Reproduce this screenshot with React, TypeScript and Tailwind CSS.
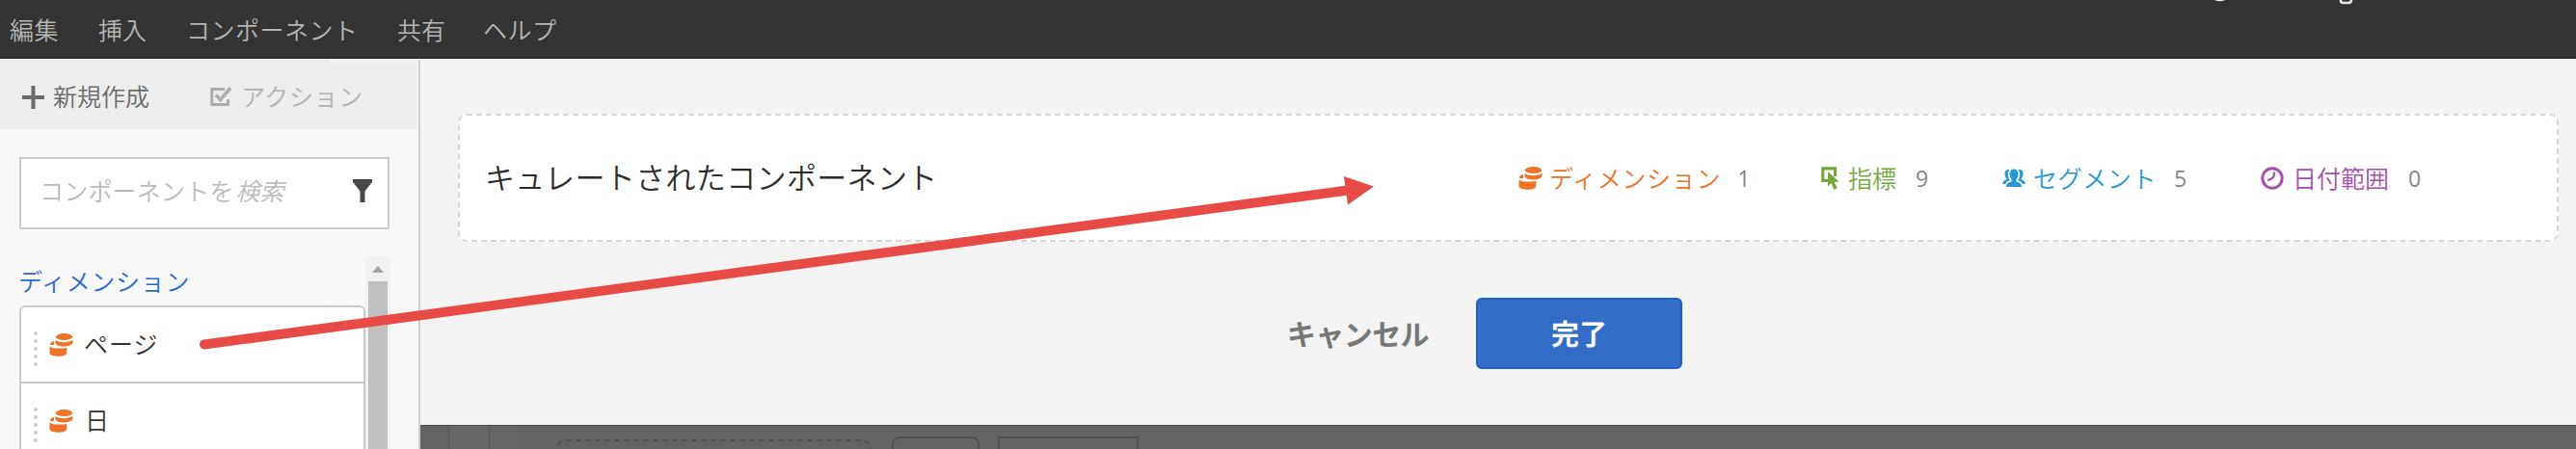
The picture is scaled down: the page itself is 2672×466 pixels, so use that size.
import React from "react";

const Coins = ({ className = "" }: { className?: string }) => (
  <svg className={`shrink-0 ${className}`} width="25" height="24" viewBox="0 0 25 24" fill="#ee7328">
    <ellipse cx="15.5" cy="3.600" rx="8.800" ry="3.500" />
    <path d="M6.500 6.800C8.500 8.600 12 9.200 15.500 9.200S22.600 8.400 24.500 6.800V9.500C23.500 12.300 20 13.600 15.500 13.600C10.500 13.600 6.500 12.200 6.500 9.500Z" />
    <path d="M5 8V12C4 12.200 2 12.200.6 11.600C.8 10 2.500 8.600 5 8Z" />
    <path d="M.5 13.400C2.500 15 6 15.600 9.500 15.600C13 15.600 16 15.400 18.300 15V20.400C17.500 22.800 13.900 23.700 9.400 23.700S1.100 22.800.5 20.400Z" />
  </svg>
);
const Metric = () => (
  <svg className="shrink-0" width="20" height="24" viewBox="0 0 20 24">
    <path d="M7 14.500H1.800V1.800H14.500V10" fill="none" stroke="#75a83b" strokeWidth="3.200" />
    <path d="M7 5V20.500l3.500-3.500 2.800 6.800 3.300-1.500-2.800-6.300 4.700-.5z" fill="#75a83b" />
  </svg>
);
const Segment = () => (
  <svg className="shrink-0" width="24" height="20" viewBox="0 0 24 20" fill="#2a98d2">
    <path d="M12 .5c3 0 4.500 2 4.500 5 0 2.500-1 4.500-2 5.500v2.500c3 1 5.500 2 5.500 5.500H4c0-3.500 2.500-4.500 5.500-5.500V11c-1-1-2-3-2-5.500 0-3 1.500-5 4.500-5z" />
    <path d="M7.500 1.200C4 .5 2.200 2.500 2.500 6c.1 2 .8 3 1.700 4v1.500C2 12.300.300 13 .2 16h3c.8-2 2.300-3 4.300-3.500v-1C5.500 8.500 5.300 4 7.500 1.200zM16.500 1.200c3.500-.7 5.300 1.300 5 4.800-.1 2-.8 3-1.700 4v1.500c2.200.8 3.900 1.500 4 4.500h-3c-.8-2-2.300-3-4.300-3.500v-1c2-3 2.200-7.500 0-10.300z" />
  </svg>
);
const Clock = () => (
  <svg className="shrink-0" width="24" height="24" viewBox="0 0 24 24" fill="none" stroke="#a74fae">
    <circle cx="12" cy="12" r="10.200" strokeWidth="3" />
    <path d="M13.800 5.500v3.500Q13 13 7 14" strokeWidth="2.200" />
  </svg>
);

const Row = ({ label, pad }: { label: string; pad: string }) => (
  <div className="flex h-[79px] shrink-0 items-center border-b-2 border-[#cbcbcb] pl-[13px]">
    <div className="mt-[8px] flex w-[4px] flex-col gap-[4px]">
      {[0, 1, 2, 3, 4].map((i) => (
        <span key={i} className="h-[4px] w-[4px] rounded-full bg-[#cfcfcf]" />
      ))}
    </div>
    <Coins className="ml-[12px]" />
    <span className={`pb-[3px] text-[25px] leading-[36px] text-[#333] ${pad}`}>{label}</span>
  </div>
);

const Stat = ({ icon, label, count, box, text, gap }: { icon: React.ReactNode; label: string; count: number; box: string; text: string; gap: string }) => (
  <div className={`flex shrink-0 items-center ${box}`}>
    {icon}
    <span className={`shrink-0 pb-[2px] text-[25px] leading-[36px] ${text}`}>{label}</span>
    <span className={`font-['Open_Sans',sans-serif] text-[23px] leading-[36px] font-normal text-[#868686] ${gap}`}>{count}</span>
  </div>
);

export default function App() {
  return (
    <div className="relative flex h-[466px] w-[2672px] flex-col overflow-hidden bg-[#f3f3f3] font-['Noto_Sans_CJK_JP',sans-serif] font-[350] whitespace-nowrap">
      <header className="relative flex h-[61px] shrink-0 items-center border-b-2 border-[#292929] bg-[#343434] pl-[10px] text-[25px] leading-[36px] text-[#b5b5b5]">
        <span className="w-[92px] tracking-[0.6px]">編集</span>
        <span className="w-[91px]">挿入</span>
        <span className="w-[219px] tracking-[0.5px]">コンポーネント</span>
        <span className="w-[89px]">共有</span>
        <span className="tracking-[0.5px]">ヘルプ</span>
        <svg className="absolute top-0 left-[2290px]" width="160" height="6" fill="none" stroke="#e8e8e8">
          <path d="M7 -1Q12.500 1.500 18 -1" strokeWidth="2" />
          <path d="M138 -1V1Q138 3 141 3H146Q149 3 149 0V-1" strokeWidth="2.500" />
        </svg>
      </header>
      <div className="flex min-h-0 flex-1 border-t border-white">
        <aside className="flex w-[436px] shrink-0 flex-col border-r-2 border-[#cecece] bg-[#f7f7f7]">
          <div className="mr-px flex h-[72px] shrink-0 items-center bg-[#ededed] pl-[23px] text-[25px] leading-[36px]">
            <svg className="mt-[5px]" width="23" height="24" viewBox="0 0 23 24" stroke="#6b6b6b" strokeWidth="4">
              <path d="M11.500 0V24M0 12H23" />
            </svg>
            <span className="mt-[2px] w-[172px] shrink-0 pl-[9px] text-[#6b6b6b]">新規作成</span>
            <svg className="mt-[4px] shrink-0" width="23" height="21" viewBox="0 0 23 21" fill="none" stroke="#adadad">
              <path d="M15 2.500H1.800V18.500H18.500V13" strokeWidth="3" />
              <path d="M6 8.500L10.500 13.500L21 1.500" strokeWidth="3.600" />
            </svg>
            <span className="mt-[2px] w-[98px] shrink-0 pl-[9px] tracking-[0.6px] text-[#b3b3b3]">アクション</span>
            <div className="-mr-[2px] h-[3px] w-[95px] shrink-0 self-start border-l border-[#cecece] bg-[#f3f3f3]" />
          </div>
          <div className="mt-[29px] ml-[20px] flex h-[75px] w-[384px] shrink-0 items-center justify-between border-2 border-[#cbcbcb] bg-white pr-[16px] pl-[19px]">
            <div className="flex pb-[8px] text-[25px] leading-[36px] text-[#bbb]">
              <span className="tracking-[0.2px]">コンポーネントを</span>
              <span className="ml-[2px] italic">検索</span>
            </div>
            <svg className="mb-[5px]" width="20" height="24" viewBox="0 0 20 24" fill="#474747">
              <path d="M0 0H20V3L12.500 12.500V24H7.500V12.500L0 3Z" />
            </svg>
          </div>
          <div className="mt-[28px] flex min-h-0 flex-1 pl-[20px]">
            <div className="flex w-[359px] shrink-0 flex-col">
              <h2 className="mt-[6px] -ml-px h-[45px] text-[25px] leading-[38px] tracking-[0.7px] text-[#2a6bcf]">ディメンション</h2>
              <div className="flex min-h-0 flex-1 flex-col overflow-hidden rounded-t-[6px] border-2 border-b-0 border-[#cbcbcb] bg-white">
                <Row label="ページ" pad="pl-[11px] tracking-[1px]" />
                <Row label="日" pad="pl-[12px]" />
              </div>
            </div>
            <div className="flex w-[26px] flex-col items-center bg-[#f1f1f1]">
              <svg className="mt-[10px] mb-[9px] shrink-0" width="12" height="7" viewBox="0 0 12 7" fill="#a2a2a2">
                <path d="M6 0L12 7H0Z" />
              </svg>
              <div className="w-[20px] flex-1 bg-[#c0c0c0]" />
            </div>
          </div>
        </aside>
        <main className="flex flex-1 flex-col">
          <div className="mt-[56px] ml-[39px] flex h-[133px] w-[2179px] shrink-0 items-center rounded-[9px] border-2 border-dashed border-[#d7d7d7] bg-white pl-[26px]">
            <h1 className="w-[1072px] pb-[3px] text-[31px] leading-[44px] tracking-[0.35px] text-[#2d2d2d]">キュレートされたコンポーネント</h1>
            <Stat icon={<Coins />} label="ディメンション" count={1} box="w-[314px]" text="pl-[7px] tracking-[0.7px] text-[#ee7328]" gap="pl-[17px]" />
            <Stat icon={<Metric />} label="指標" count={9} box="w-[188px]" text="pl-[8px] text-[#75a83b]" gap="pl-[20px]" />
            <Stat icon={<Segment />} label="セグメント" count={5} box="w-[268px]" text="pl-[8px] tracking-[0.6px] text-[#2a98d2]" gap="pl-[18px]" />
            <Stat icon={<Clock />} label="日付範囲" count={0} box="" text="pl-[9px] text-[#a74fae]" gap="pl-[20px]" />
          </div>
          <div className="mt-[58px] flex h-[74px] shrink-0 items-center pl-[899px] font-bold">
            <button className="w-[196px] pb-[3px] text-left text-[30px] leading-[44px] tracking-[-0.6px] text-[#777]">キャンセル</button>
            <button className="h-[74px] w-[214px] rounded-[6px] border-2 border-[#2060c2] bg-[#326ec8] pb-[3px] text-[29px] leading-[44px] text-white">完了</button>
          </div>
          <div className="mt-auto flex h-[25px] shrink-0 overflow-hidden border-t border-[#4c4c4c] bg-[#636363]">
            <div className="w-[30px] border-r border-[#545454]" />
            <div className="w-[42px] border-r border-[#545454] bg-[#676767]" />
            <div className="w-[29px] bg-[#666]" />
            <div className="mt-[14px] ml-[40px] h-[40px] w-[327px] rounded-[10px] border-2 border-dashed border-[#505050]" />
            <div className="mt-[11px] ml-[21px] h-[40px] w-[91px] rounded-[8px] border-2 border-[#505050]" />
            <div className="mt-[11px] ml-[19px] h-[40px] w-[146px] border-2 border-[#505050]" />
          </div>
        </main>
      </div>
      <svg className="pointer-events-none absolute top-0 left-0" width="2672" height="466" fill="#e84b45">
        <path d="M212 357.500L1398 197.500" stroke="#e84b45" strokeWidth="10" strokeLinecap="round" />
        <path d="M1394 183L1425 193.500L1398 212.500Z" />
      </svg>
    </div>
  );
}
